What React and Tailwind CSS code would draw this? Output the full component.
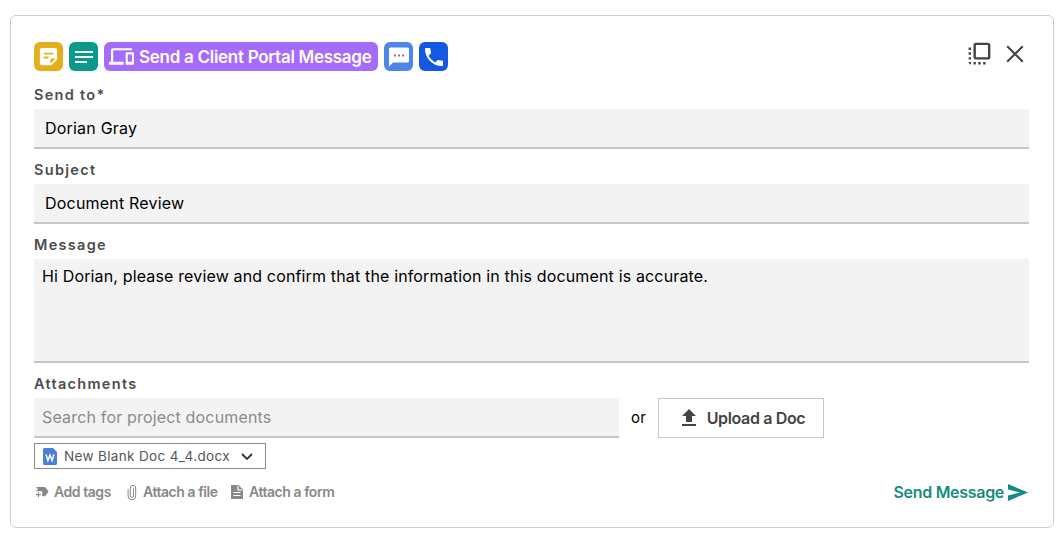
import { MdStickyNote2, MdNotes, MdDevices, MdPhone, MdFlipToFront, MdUpload } from 'react-icons/md';

function SmsIcon() {
  return (
    <svg viewBox="0 0 22 22" className="w-[22px] h-[22px]">
      <path d="M2.500 1.500h17a1.500 1.500 0 0 1 1.500 1.500v12a1.500 1.500 0 0 1-1.500 1.500H5l-4 4V3a1.500 1.500 0 0 1 1.500-1.500z" fill="#fff" />
      <path d="M6 8.500h2v2H6zM10 8.500h2v2h-2zM14 8.500h2v2h-2z" fill="#6d7f9c" />
    </svg>
  );
}

function CloseIcon() {
  return (
    <svg viewBox="0 0 18 18" className="w-[18px] h-[18px]" fill="none" stroke="currentColor" strokeWidth="2">
      <path d="M1.200 1.200l15.600 15.600M16.800 1.200L1.200 16.800" />
    </svg>
  );
}

function TagsIcon() {
  return (
    <svg viewBox="0 0 14 12" className="w-[14px] h-3">
      <path d="M1 1h8.300c.5 0 .9.2 1.200.6L13.600 5.600l-3.100 4.100c-.3.300-.6.500-1 .5H7.200V5.200H1l2.200-2z" fill="currentColor" />
      <path d="M2.900 6.200H4v1.900h1.900v1.100H4v1.900H2.900V9.200H1V8.100h1.900z" fill="currentColor" />
    </svg>
  );
}

function ClipIcon() {
  return (
    <svg viewBox="0 0 10 17" className="w-[10px] h-[17px]" fill="none" stroke="currentColor" strokeWidth="1">
      <path d="M6.500 4.500v7.300a1.600 1.600 0 0 1-3.200 0V4a2.700 2.700 0 0 1 5.400 0v8a3.800 3.800 0 0 1-7.600 0V5" />
    </svg>
  );
}

function FormIcon() {
  return (
    <svg viewBox="0 0 12 14" className="w-3 h-[14px]">
      <path d="M0 0h7.500L12 4.500V14H0z" fill="currentColor" />
      <path d="M7 .8V5h4.200M2.500 7.500h7M2.500 10.500h7" stroke="#fff" strokeWidth="1.200" fill="none" />
    </svg>
  );
}

function DocxIcon() {
  return (
    <svg viewBox="0 0 14 17" className="w-[14px] h-[17px] shrink-0">
      <path d="M1.500 0H10l4 4v11.500a1.500 1.500 0 0 1-1.500 1.500h-11A1.500 1.500 0 0 1 0 15.500v-14A1.500 1.500 0 0 1 1.500 0z" fill="#4a80dc" />
      <path d="M3 6.500l1.900 6L7 7l2.100 5.500 1.900-6" stroke="#fff" strokeWidth="1.500" fill="none" />
    </svg>
  );
}

function SendIcon() {
  return (
    <svg viewBox="0 0 20 17" className="w-5 h-[17px]" fill="currentColor">
      <path d="M0 0l20 8.500L0 17v-5.500l12-3L0 5.500z" />
    </svg>
  );
}

function Label({ children, className = '' }) {
  return (
    <div className={`h-5 leading-5 text-[14.5px] font-semibold tracking-[1.3px] text-[#4c4c4c] ${className}`}>
      <span>{children}</span>
    </div>
  );
}

function Field({ children }) {
  return (
    <div className="h-10 flex items-center pl-[11px] bg-[#f3f3f3] border-b-2 border-[#c6c6c6] text-base tracking-[0.2px] text-black">
      <span>{children}</span>
    </div>
  );
}

function App() {
  return (
    <div className="h-[541px] pt-[15px] pl-[10px] bg-white font-['Inter',sans-serif]">
      <div className="w-[1044px] h-[513px] pt-[26px] pl-[23px] pr-6 border border-[#cdcdcd] rounded-md flex flex-col">
        <div className="h-[29px] flex items-center justify-between">
          <div className="flex gap-1.5">
            <div className="w-[29px] h-[29px] rounded-md bg-[#e5ae1d] flex items-center justify-center text-white">
              <MdStickyNote2 size={23} />
            </div>
            <div className="w-[29px] h-[29px] rounded-md bg-[#0b998c] flex items-center justify-center text-white">
              <MdNotes size={24} />
            </div>
            <div className="w-[274px] h-[29px] rounded-md bg-[#a56bfa] flex items-center pl-[5px] gap-[5px] text-white">
              <MdDevices size={25} />
              <span className="pt-0.5 text-[17px] font-semibold tracking-[-0.28px] whitespace-nowrap">Send a Client Portal Message</span>
            </div>
            <div className="w-[29px] h-[29px] rounded-md bg-[#4b87e8] flex items-center justify-center">
              <SmsIcon />
            </div>
            <div className="w-[29px] h-[29px] rounded-md bg-[#1359e2] flex items-center justify-center text-white">
              <MdPhone size={24} />
            </div>
          </div>
          <div className="flex items-center gap-3 pb-1.5 pr-[5px] text-[#444]">
            <MdFlipToFront size={29} />
            <CloseIcon />
          </div>
        </div>

        <Label className="mt-[14px] mb-1">Send to*</Label>
        <Field>Dorian Gray</Field>

        <Label className="mt-[11px] mb-1">Subject</Label>
        <Field>Document Review</Field>

        <Label className="mt-[11px] mb-1">Message</Label>
        <div className="h-[104px] pt-[7px] pl-2 bg-[#f3f3f3] border-b-2 border-[#c6c6c6] text-base leading-5 tracking-[0.15px] text-black">
          <span>Hi Dorian, please review and confirm that the information in this document is accurate.</span>
        </div>

        <Label className="mt-[11px] mb-1">Attachments</Label>
        <div className="flex items-center">
          <div className="w-[585px] h-10 flex items-center pl-2 bg-[#f3f3f3] border-b-2 border-[#c6c6c6] text-base tracking-[0.17px] text-[#8b8b8b]">
            <span>Search for project documents</span>
          </div>
          <span className="w-[39px] text-center text-[15px] tracking-[0.3px]">or</span>
          <div className="w-[166px] h-10 border border-[#c6c6c6] flex items-center justify-center gap-1.5 text-[#444]">
            <MdUpload size={24} />
            <span className="text-base font-semibold tracking-[-0.35px]">Upload a Doc</span>
          </div>
        </div>

        <div className="w-[232px] h-[26px] mt-[5px] pl-2 border border-[#8b8b8b] flex items-center text-[#555]">
          <DocxIcon />
          <span className="ml-[7px] w-[165px] whitespace-nowrap text-[13.5px] tracking-[0.35px]">New Blank Doc 4_4.docx</span>
          <svg viewBox="0 0 12 7" className="ml-3 w-3 h-[7px]" fill="none" stroke="#333" strokeWidth="1.800">
            <path d="M1 1l5 5 5-5" />
          </svg>
        </div>

        <div className="h-6 mt-[11px] flex items-center justify-between">
          <div className="flex items-center pl-px text-sm font-semibold tracking-[-0.45px] text-[#888]">
            <TagsIcon />
            <span className="ml-[5px] w-[73px]">Add tags</span>
            <ClipIcon />
            <span className="ml-[6px] w-[88px]">Attach a file</span>
            <FormIcon />
            <span className="ml-[6px]">Attach a form</span>
          </div>
          <div className="flex items-center gap-1 pr-px text-[#168c80]">
            <span className="text-base font-semibold tracking-[-0.3px]">Send Message</span>
            <SendIcon />
          </div>
        </div>
      </div>
    </div>
  );
}

export default App;
